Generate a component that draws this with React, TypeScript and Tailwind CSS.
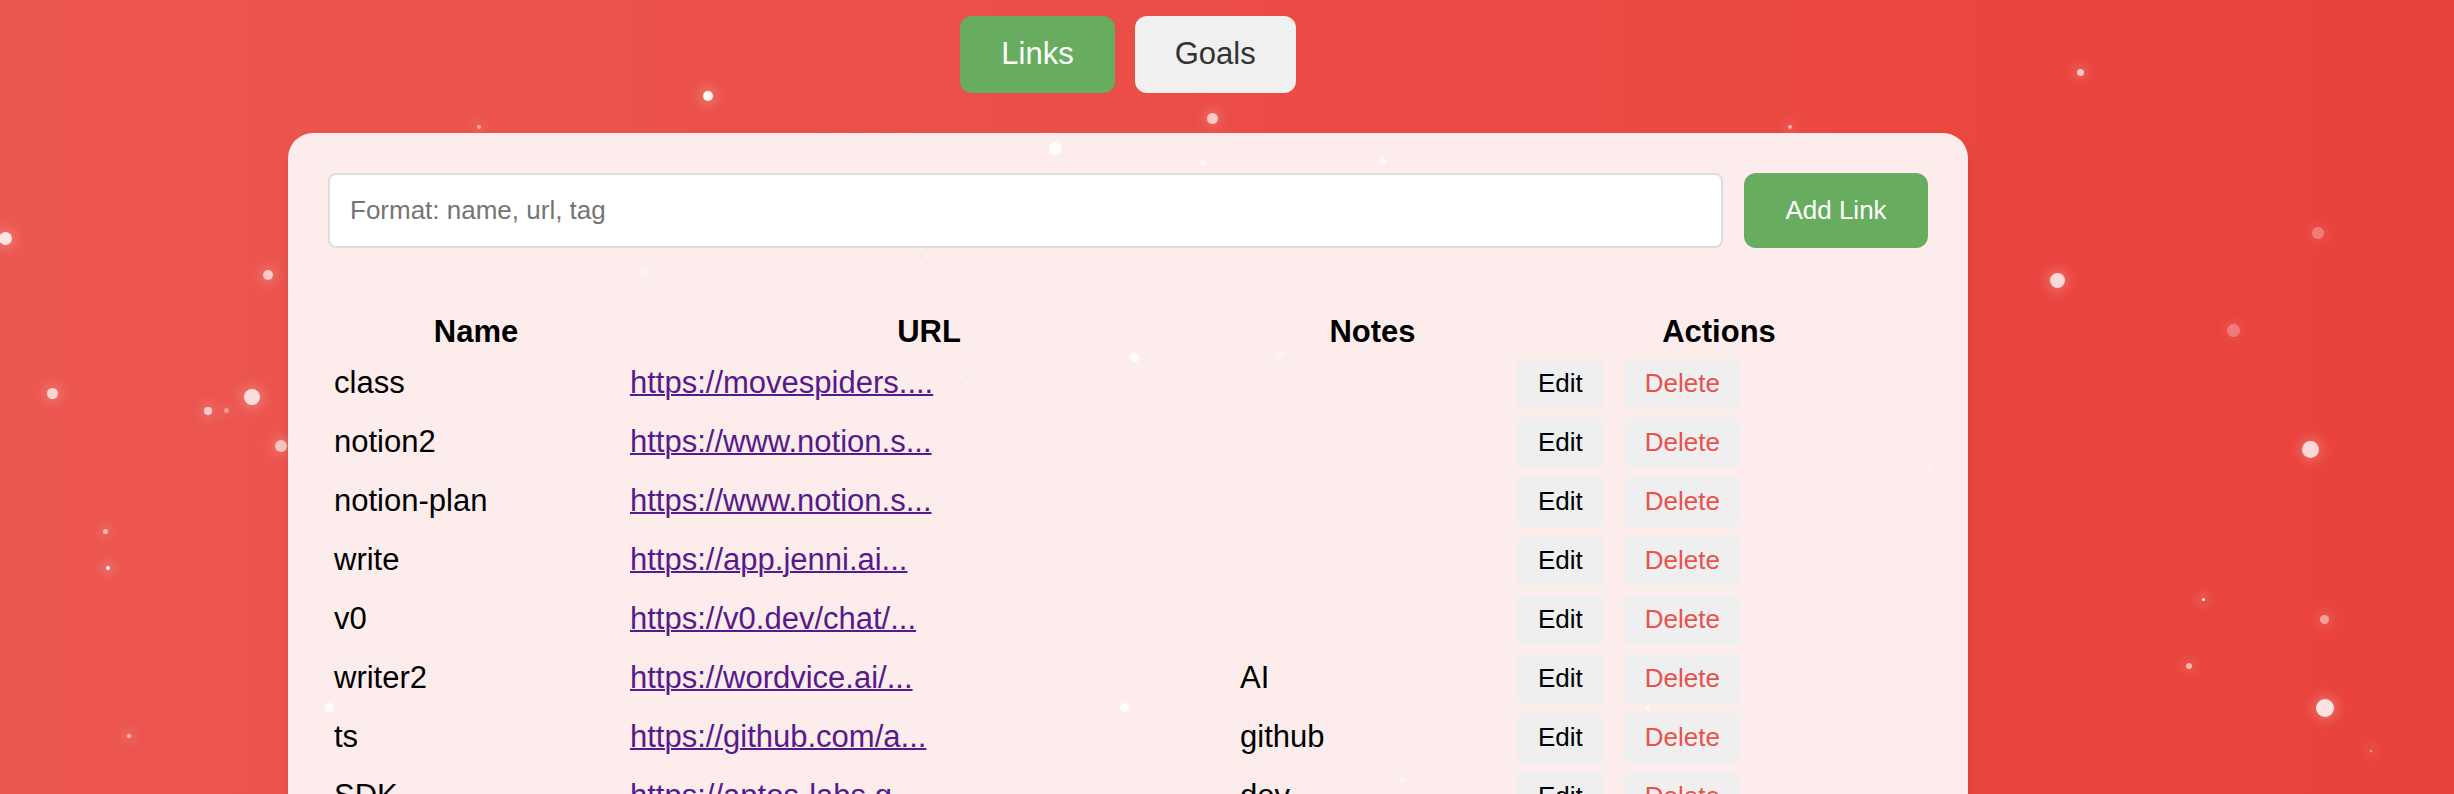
import React from 'react';

type Link = { name: string; url: string; note: string };

const links: Link[] = [
  { name: 'class', url: 'https://movespiders....', note: '' },
  { name: 'notion2', url: 'https://www.notion.s...', note: '' },
  { name: 'notion-plan', url: 'https://www.notion.s...', note: '' },
  { name: 'write', url: 'https://app.jenni.ai...', note: '' },
  { name: 'v0', url: 'https://v0.dev/chat/...', note: '' },
  { name: 'writer2', url: 'https://wordvice.ai/...', note: 'AI' },
  { name: 'ts', url: 'https://github.com/a...', note: 'github' },
  { name: 'SDK', url: 'https://aptos-labs.g...', note: 'dev' },
  { name: 'docs', url: 'https://docs.google...', note: '' },
];

// floating bokeh particles: x, y, size, opacity
const dots: [number, number, number, number][] = [
  [5, 238, 13, 0.85],
  [268, 275, 10, 0.7],
  [52, 393, 11, 0.75],
  [208, 411, 8, 0.7],
  [226, 410, 5, 0.4],
  [252, 397, 16, 0.8],
  [281, 446, 12, 0.65],
  [105, 531, 5, 0.6],
  [108, 568, 4, 0.95],
  [129, 736, 4, 0.6],
  [479, 127, 4, 0.5],
  [708, 96, 10, 0.95],
  [1212, 118, 11, 0.7],
  [1055, 148, 13, 0.9],
  [1203, 163, 6, 0.5],
  [1382, 161, 7, 0.6],
  [643, 271, 10, 0.35],
  [927, 256, 4, 0.5],
  [1134, 357, 9, 0.9],
  [1280, 354, 7, 0.4],
  [967, 383, 5, 0.4],
  [1790, 127, 4, 0.6],
  [2080, 72, 7, 0.7],
  [2057, 280, 15, 0.8],
  [2318, 233, 12, 0.3],
  [2233, 330, 13, 0.3],
  [2310, 449, 17, 0.8],
  [1930, 470, 4, 0.3],
  [2203, 599, 3, 0.9],
  [2324, 619, 9, 0.5],
  [2189, 666, 6, 0.6],
  [2325, 708, 18, 0.85],
  [2371, 751, 2, 0.6],
  [329, 707, 9, 0.9],
  [1124, 707, 9, 0.9],
  [1647, 708, 5, 0.5],
  [1402, 780, 5, 0.4],
];

export default function App() {
  return (
    <div
      className="relative h-screen w-full overflow-hidden bg-linear-to-r from-[#ec5750] to-[#e9423b]"
      style={{ fontFamily: '"Liberation Sans", Arial, sans-serif' }}
    >
      <div className="flex w-[2256px] flex-col items-center">
        <div className="mt-[16px] flex gap-[20px]">
          <button className="h-[77px] rounded-[12px] bg-[#68ad5f] px-[41px] text-[31px] text-white">
            Links
          </button>
          <button className="h-[77px] rounded-[12px] bg-[#f0f0f0] px-[40px] text-[31px] text-[#333333]">
            Goals
          </button>
        </div>

        <div className="mt-[40px] w-[1680px] rounded-[25px] bg-[#fdecec] p-[40px] shadow-lg">
          <div className="flex gap-[21px]">
            <input
              className="h-[75px] flex-1 rounded-[8px] border-2 border-[#dddddd] bg-white pl-[20px] text-[26px] outline-none placeholder:text-[#757575]"
              placeholder="Format: name, url, tag"
            />
            <button className="h-[75px] w-[184px] rounded-[12px] bg-[#68ad5f] text-[26px] text-white">
              Add Link
            </button>
          </div>

          <table className="mt-[60px] w-[1599px] table-fixed border-collapse text-[31px] text-black">
            <colgroup>
              <col className="w-[296px]" />
              <col className="w-[610px]" />
              <col className="w-[277px]" />
              <col className="w-[416px]" />
            </colgroup>
            <thead>
              <tr>
                <th className="pt-[6px] pb-[4px] text-center font-bold leading-[36px]">Name</th>
                <th className="pt-[6px] pb-[4px] text-center font-bold leading-[36px]">URL</th>
                <th className="pt-[6px] pb-[4px] text-center font-bold leading-[36px]">Notes</th>
                <th className="pt-[6px] pb-[4px] text-center font-bold leading-[36px]">Actions</th>
              </tr>
            </thead>
            <tbody>
              {links.map((link, i) => (
                <tr key={i} className="h-[59px]">
                  <td className="px-[6px] align-middle">{link.name}</td>
                  <td className="px-[6px] align-middle">
                    <a href="#" className="text-[#551a8b] underline decoration-2">
                      {link.url}
                    </a>
                  </td>
                  <td className="px-[6px] align-middle">{link.note}</td>
                  <td className="px-[6px] align-middle">
                    <div className="flex gap-[20px]">
                      <button className="h-[50px] rounded-[6px] bg-[#efefef] px-[21px] text-[26px] text-black">
                        Edit
                      </button>
                      <button className="h-[50px] rounded-[6px] bg-[#efefef] px-[21px] text-[26px] text-[#e9514c]">
                        Delete
                      </button>
                    </div>
                  </td>
                </tr>
              ))}
            </tbody>
          </table>
        </div>
      </div>

      <div className="pointer-events-none absolute inset-0">
        {dots.map(([x, y, s, o], i) => (
          <span
            key={i}
            className="absolute rounded-full bg-white shadow-[0_0_12px_4px_rgba(255,255,255,0.25)]"
            style={{ left: x - s / 2, top: y - s / 2, width: s, height: s, opacity: o }}
          />
        ))}
      </div>
    </div>
  );
}
